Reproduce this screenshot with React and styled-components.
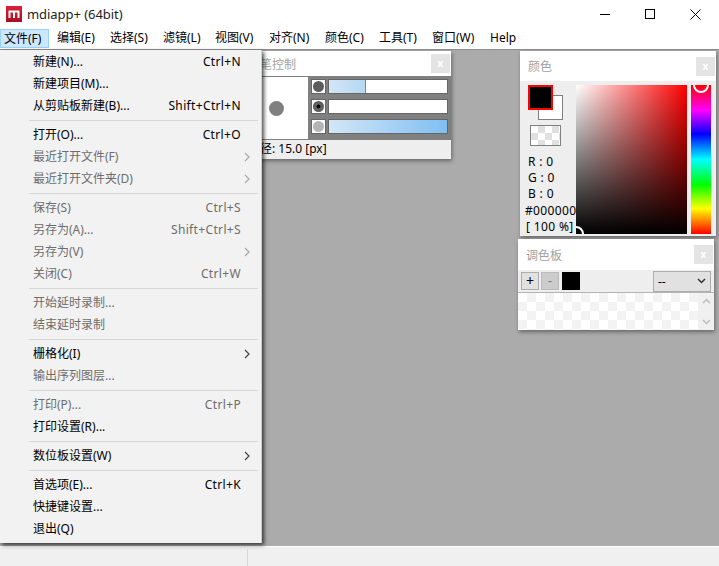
import React from "react";
import styled, { createGlobalStyle } from "styled-components";

const GlobalStyle = createGlobalStyle`
    html, body {
        margin: 0;
        padding: 0;
        background: #fff;
    }
    body {
        font-family: "Noto Sans", "Noto Sans CJK SC", "Liberation Sans", sans-serif;
        font-size: 12px;
        color: #000;
    }
`;

const Window = styled.div`
    width: 719px;
    height: 566px;
    display: flex;
    flex-direction: column;
    overflow: hidden;
    position: relative;
`;

const TitleBar = styled.div`
    height: 28px;
    display: flex;
    align-items: center;
    padding-left: 6px;
    background: #fff;
`;

const AppTitle = styled.span`
    margin-left: 5px;
    font-size: 13px;
    letter-spacing: -0.05px;
    color: #222;
    flex: 1;
`;

const WinButtons = styled.div`
    display: flex;
    align-items: center;
    margin-right: 18px;
    gap: 35px;
`;

const MenuBar = styled.div`
    height: 21px;
    display: flex;
    align-items: center;
    background: #fff;
    border-bottom: 1px solid #8c8c8c;
`;

const MenuTitle = styled.div`
    width: ${(p) => p.$w}px;
    height: 19px;
    line-height: 18px;
    padding-left: ${(p) => (p.$active ? 3 : 4)}px;
    box-sizing: border-box;
    white-space: nowrap;
    background: ${(p) => (p.$active ? "#cce8ff" : "transparent")};
    border: ${(p) => (p.$active ? "1px solid #99d1ff" : "none")};
    margin-right: ${(p) => p.$mr || 0}px;
`;

const Workspace = styled.div`
    flex: 1;
    position: relative;
    background: #ababab;
`;

const StatusBar = styled.div`
    height: 19px;
    display: flex;
    background: #f0f0f0;
    border-top: 1px solid #fff;
`;

const StatusCell = styled.div`
    width: 247px;
    height: 17px;
    margin-top: 2px;
    border-right: 1px solid #d8d8d8;
`;

const Panel = styled.div`
    position: absolute;
    left: ${(p) => p.$x}px;
    top: ${(p) => p.$y}px;
    width: ${(p) => p.$w}px;
    background: #eee;
    box-shadow: 1px 2px 4px rgba(0, 0, 0, 0.4);
    display: flex;
    flex-direction: column;
`;

const PanelHead = styled.div`
    height: ${(p) => p.$h}px;
    background: #fff;
    display: flex;
    align-items: center;
    justify-content: space-between;
    padding: 0 1px 0 8px;
    color: #a2a2a2;
    font-size: 12px;
    flex: none;
`;

const CloseBox = styled.div`
    width: 19px;
    height: 19px;
    background: #e4e4e4;
    color: #fff;
    font-size: 10px;
    font-weight: 700;
    line-height: 18px;
    text-align: center;
`;

const BrushBody = styled.div`
    height: 64px;
    background: #808080;
    display: flex;
`;

const BrushPreview = styled.div`
    width: 68px;
    height: 62px;
    margin-top: 1px;
    background: #fff;
    display: flex;
    align-items: center;
    justify-content: flex-end;
    padding-right: 24px;
    box-sizing: border-box;
`;

const BrushDot = styled.div`
    width: 15px;
    height: 15px;
    border-radius: 50%;
    background: #808080;
`;

const BrushRows = styled.div`
    padding: 3px 3px 0 3px;
    display: flex;
    flex-direction: column;
    gap: 5px;
`;

const BrushRow = styled.div`
    display: flex;
    gap: 2px;
`;

const RowIcon = styled.div`
    width: 15px;
    height: 15px;
    box-sizing: border-box;
    background: #fff;
    border: 1px solid #666;
    display: flex;
    align-items: center;
    justify-content: center;
`;

const RowKnob = styled.div`
    width: 11px;
    height: 11px;
    border-radius: 50%;
    background: ${(p) => p.$bg};
`;

const Bar = styled.div`
    width: 120px;
    height: 15px;
    box-sizing: border-box;
    background: #fff;
    border: 1px solid #666;
`;

const BarFill = styled.div`
    height: 100%;
    background: linear-gradient(to right, ${(p) => p.$from}, ${(p) => p.$to});
    border-right: ${(p) => (p.$edge ? "1px solid #3d96ee" : "none")};
    box-sizing: border-box;
`;

const BrushFoot = styled.div`
    height: 19px;
    line-height: 18px;
    padding-left: 8px;
    background: #eee;
    white-space: nowrap;
`;

const ColorBody = styled.div`
    height: 155px;
    position: relative;
    display: flex;
    padding: 4px 5px 0 8px;
    box-sizing: border-box;
`;

const ColorLeft = styled.div`
    width: 48px;
    flex: none;
    position: relative;
`;

const SwatchBack = styled.div`
    position: absolute;
    left: 10px;
    top: 10px;
    width: 25px;
    height: 25px;
    box-sizing: border-box;
    background: #fff;
    border: 1px solid #808080;
`;

const SwatchFront = styled.div`
    position: absolute;
    left: 0;
    top: 0;
    width: 25px;
    height: 25px;
    box-sizing: border-box;
    background: #000;
    border: 2px solid #f00;
`;

const Checker = styled.div`
    background-color: #fff;
    background-image: repeating-conic-gradient(${(p) => p.$tone} 0 25%, #fff 0 50%);
    background-size: ${(p) => p.$size}px ${(p) => p.$size}px;
`;

const AlphaBox = styled(Checker)`
    position: absolute;
    left: 2px;
    top: 40px;
    width: 31px;
    height: 21px;
    box-sizing: border-box;
    border: 1px solid #808080;
`;

const Values = styled.div`
    position: absolute;
    left: 0;
    top: 69px;
    letter-spacing: 0.35px;
    white-space: nowrap;
    z-index: 1;
`;

const ValueLine = styled.div`
    height: ${(p) => p.$h || 16}px;
    line-height: 16px;
    margin-left: ${(p) => p.$ml || 0}px;
`;

const SvField = styled.div`
    width: 111px;
    height: 149px;
    background: linear-gradient(to top, #000, transparent), linear-gradient(to right, #fff, #f00);
    position: relative;
`;

const HueStrip = styled.div`
    width: 20px;
    height: 149px;
    margin-left: 4px;
    background: linear-gradient(to bottom, #f00, #f0f 17%, #00f 33%, #0ff 50%, #0f0 67%, #ff0 83%, #f00);
    position: relative;
    overflow: hidden;
`;

const Ring = styled.div`
    position: absolute;
    left: ${(p) => p.$x}px;
    top: ${(p) => p.$y}px;
    width: 12px;
    height: 12px;
    border: 2px solid #fff;
    border-radius: 50%;
`;

const SvClip = styled.div`
    position: absolute;
    inset: 0;
    overflow: hidden;
`;

const PaletteBar = styled.div`
    height: 23px;
    display: flex;
    align-items: center;
    padding-left: 3px;
    box-sizing: border-box;
    border-bottom: 1px solid #b4b4b4;
    background: #eee;
`;

const PalButton = styled.div`
    width: 18px;
    height: 18px;
    box-sizing: border-box;
    margin-right: 2px;
    border: 1px solid ${(p) => (p.$off ? "#bcbcbc" : "#adadad")};
    background: ${(p) => (p.$off ? "#cccccc" : "#e1e1e1")};
    color: ${(p) => (p.$off ? "#888" : "#000")};
    text-align: center;
    line-height: 15px;
    font-size: 14px;
`;

const PalBlack = styled.div`
    width: 18px;
    height: 18px;
    margin-left: 1px;
    background: #000;
`;

const PalSelect = styled.div`
    width: 58px;
    height: 21px;
    margin-left: 73px;
    box-sizing: border-box;
    border: 1px solid #adadad;
    background: #e1e1e1;
    display: flex;
    align-items: center;
    justify-content: space-between;
    padding: 0 4px;
`;

const PalList = styled.div`
    height: 37px;
    display: flex;
`;

const PalGrid = styled(Checker)`
    flex: 1;
`;

const PalScroll = styled.div`
    width: 16px;
    background: #f0f0f0;
    display: flex;
    flex-direction: column;
    align-items: center;
    justify-content: space-between;
    padding: 5px 0;
    box-sizing: border-box;
`;

const Menu = styled.div`
    position: absolute;
    left: 0;
    top: 0;
    width: 262px;
    height: 493px;
    box-sizing: border-box;
    padding-top: 1px;
    background: #f2f2f2;
    box-shadow: 2px 2px 4px rgba(0, 0, 0, 0.7);
    border-right: 1px solid #cfcfcf;
`;

const MenuRow = styled.div`
    height: 22px;
    line-height: 21px;
    display: flex;
    justify-content: space-between;
    padding: 0 20px 0 33px;
    color: ${(p) => (p.$off ? "#6d6d6d" : "#000")};
    white-space: nowrap;
    position: relative;
`;

const KeyHint = styled.span`
    letter-spacing: 0.35px;
`;

const Arrow = styled.svg`
    position: absolute;
    right: 11px;
    top: 6px;
`;

const Separator = styled.div`
    height: 1px;
    margin: 3px 3px 3px 29px;
    background: #d7d7d7;
`;

const MENU = [
    { label: "新建(N)...", key: "Ctrl+N" },
    { label: "新建项目(M)..." },
    { label: "从剪贴板新建(B)...", key: "Shift+Ctrl+N" },
    null,
    { label: "打开(O)...", key: "Ctrl+O" },
    { label: "最近打开文件(F)", off: true, sub: true },
    { label: "最近打开文件夹(D)", off: true, sub: true },
    null,
    { label: "保存(S)", key: "Ctrl+S", off: true },
    { label: "另存为(A)...", key: "Shift+Ctrl+S", off: true },
    { label: "另存为(V)", off: true, sub: true },
    { label: "关闭(C)", key: "Ctrl+W", off: true },
    null,
    { label: "开始延时录制...", off: true },
    { label: "结束延时录制", off: true },
    null,
    { label: "栅格化(I)", sub: true },
    { label: "输出序列图层...", off: true },
    null,
    { label: "打印(P)...", key: "Ctrl+P", off: true },
    { label: "打印设置(R)..." },
    null,
    { label: "数位板设置(W)", sub: true },
    null,
    { label: "首选项(E)...", key: "Ctrl+K" },
    { label: "快捷键设置..." },
    { label: "退出(Q)" },
];

const TOP_MENUS = [
    ["文件(F)", 49, 4],
    ["编辑(E)", 53],
    ["选择(S)", 53],
    ["滤镜(L)", 52],
    ["视图(V)", 54],
    ["对齐(N)", 56],
    ["颜色(C)", 54],
    ["工具(T)", 53],
    ["窗口(W)", 58],
    ["Help", 40],
];

function AppIcon() {
    return (
        <svg width="16" height="16" viewBox="0 0 16 16">
            <defs>
                <linearGradient id="logo" x1="0" y1="0" x2="0" y2="1">
                    <stop offset="0" stopColor="#d8213a" />
                    <stop offset="1" stopColor="#a80f22" />
                </linearGradient>
            </defs>
            <rect width="16" height="16" fill="url(#logo)" />
            <path d="M3.5 12V5.5H12.5V12M8 5.5V12" fill="none" stroke="#fff" strokeWidth="2" />
        </svg>
    );
}

function Chevron({ up }) {
    return (
        <svg width="9" height="6" viewBox="0 0 9 6">
            <path d={up ? "M1 5L4.5 1.5L8 5" : "M1 1L4.5 4.5L8 1"} fill="none" stroke={up === undefined ? "#333" : "#bdbdbd"} strokeWidth="1.5" />
        </svg>
    );
}

export default function App() {
    return (
        <Window>
            <GlobalStyle />
            <TitleBar>
                <AppIcon />
                <AppTitle>mdiapp+ (64bit)</AppTitle>
                <WinButtons>
                    <svg width="10" height="10" viewBox="0 0 10 10">
                        <path d="M0 5.5H10" stroke="#000" />
                    </svg>
                    <svg width="10" height="10" viewBox="0 0 10 10">
                        <rect x="0.5" y="0.5" width="9" height="9" fill="none" stroke="#000" />
                    </svg>
                    <svg width="11" height="11" viewBox="0 0 11 11">
                        <path d="M0.5 0.5L10.5 10.5M10.5 0.5L0.5 10.5" stroke="#000" />
                    </svg>
                </WinButtons>
            </TitleBar>
            <MenuBar>
                {TOP_MENUS.map(([label, w, mr], i) => (
                    <MenuTitle key={label} $w={w} $mr={mr} $active={i === 0}>
                        {label}
                    </MenuTitle>
                ))}
            </MenuBar>
            <Workspace>
                <Panel $x={240} $y={1} $w={211}>
                    <PanelHead $h={25}>
                        画笔控制
                        <CloseBox>x</CloseBox>
                    </PanelHead>
                    <BrushBody>
                        <BrushPreview>
                            <BrushDot />
                        </BrushPreview>
                        <BrushRows>
                            <BrushRow>
                                <RowIcon>
                                    <RowKnob $bg="#5c5c5c" />
                                </RowIcon>
                                <Bar>
                                    <BarFill $from="#d3e6f6" $to="#b4d8f3" $edge style={{ width: "31%" }} />
                                </Bar>
                            </BrushRow>
                            <BrushRow>
                                <RowIcon>
                                    <RowKnob $bg="radial-gradient(circle, #000 0 20%, #666 30%, #505050 100%)" />
                                </RowIcon>
                                <Bar />
                            </BrushRow>
                            <BrushRow>
                                <RowIcon>
                                    <RowKnob $bg="#b4b4b4" />
                                </RowIcon>
                                <Bar>
                                    <BarFill $from="#d3e6f6" $to="#7fbff3" style={{ width: "100%" }} />
                                </Bar>
                            </BrushRow>
                        </BrushRows>
                    </BrushBody>
                    <BrushFoot>直径: 15.0 [px]</BrushFoot>
                </Panel>

                <Panel $x={520} $y={1} $w={196}>
                    <PanelHead $h={30}>
                        颜色
                        <CloseBox>x</CloseBox>
                    </PanelHead>
                    <ColorBody>
                        <ColorLeft>
                            <SwatchBack />
                            <SwatchFront />
                            <AlphaBox $size={14} $tone="#e0e0e0" />
                            <Values>
                                <ValueLine>R : 0</ValueLine>
                                <ValueLine>G : 0</ValueLine>
                                <ValueLine $h={17}>B : 0</ValueLine>
                                <ValueLine $ml={-3}>#000000</ValueLine>
                                <ValueLine $ml={-2}>[ 100 %]</ValueLine>
                            </Values>
                        </ColorLeft>
                        <SvField>
                            <SvClip>
                                <Ring $x={-8} $y={141} />
                            </SvClip>
                        </SvField>
                        <HueStrip>
                            <Ring $x={2} $y={-8} />
                        </HueStrip>
                    </ColorBody>
                </Panel>

                <Panel $x={518} $y={189} $w={196}>
                    <PanelHead $h={31}>
                        调色板
                        <CloseBox>x</CloseBox>
                    </PanelHead>
                    <PaletteBar>
                        <PalButton>+</PalButton>
                        <PalButton $off>-</PalButton>
                        <PalBlack />
                        <PalSelect>
                            --
                            <Chevron />
                        </PalSelect>
                    </PaletteBar>
                    <PalList>
                        <PalGrid $size={18} $tone="#f3f3f3" />
                        <PalScroll>
                            <Chevron up />
                            <Chevron up={false} />
                        </PalScroll>
                    </PalList>
                </Panel>

                <Menu>
                    {MENU.map((item, i) =>
                        item ? (
                            <MenuRow key={i} $off={item.off}>
                                <span>{item.label}</span>
                                {item.key && <KeyHint>{item.key}</KeyHint>}
                                {item.sub && (
                                    <Arrow width="6" height="10" viewBox="0 0 6 10">
                                        <path d="M1 1L5 5L1 9" fill="none" stroke={item.off ? "#a8a8a8" : "#444"} strokeWidth="1.2" />
                                    </Arrow>
                                )}
                            </MenuRow>
                        ) : (
                            <Separator key={i} />
                        )
                    )}
                </Menu>
            </Workspace>
            <StatusBar>
                <StatusCell />
            </StatusBar>
        </Window>
    );
}
